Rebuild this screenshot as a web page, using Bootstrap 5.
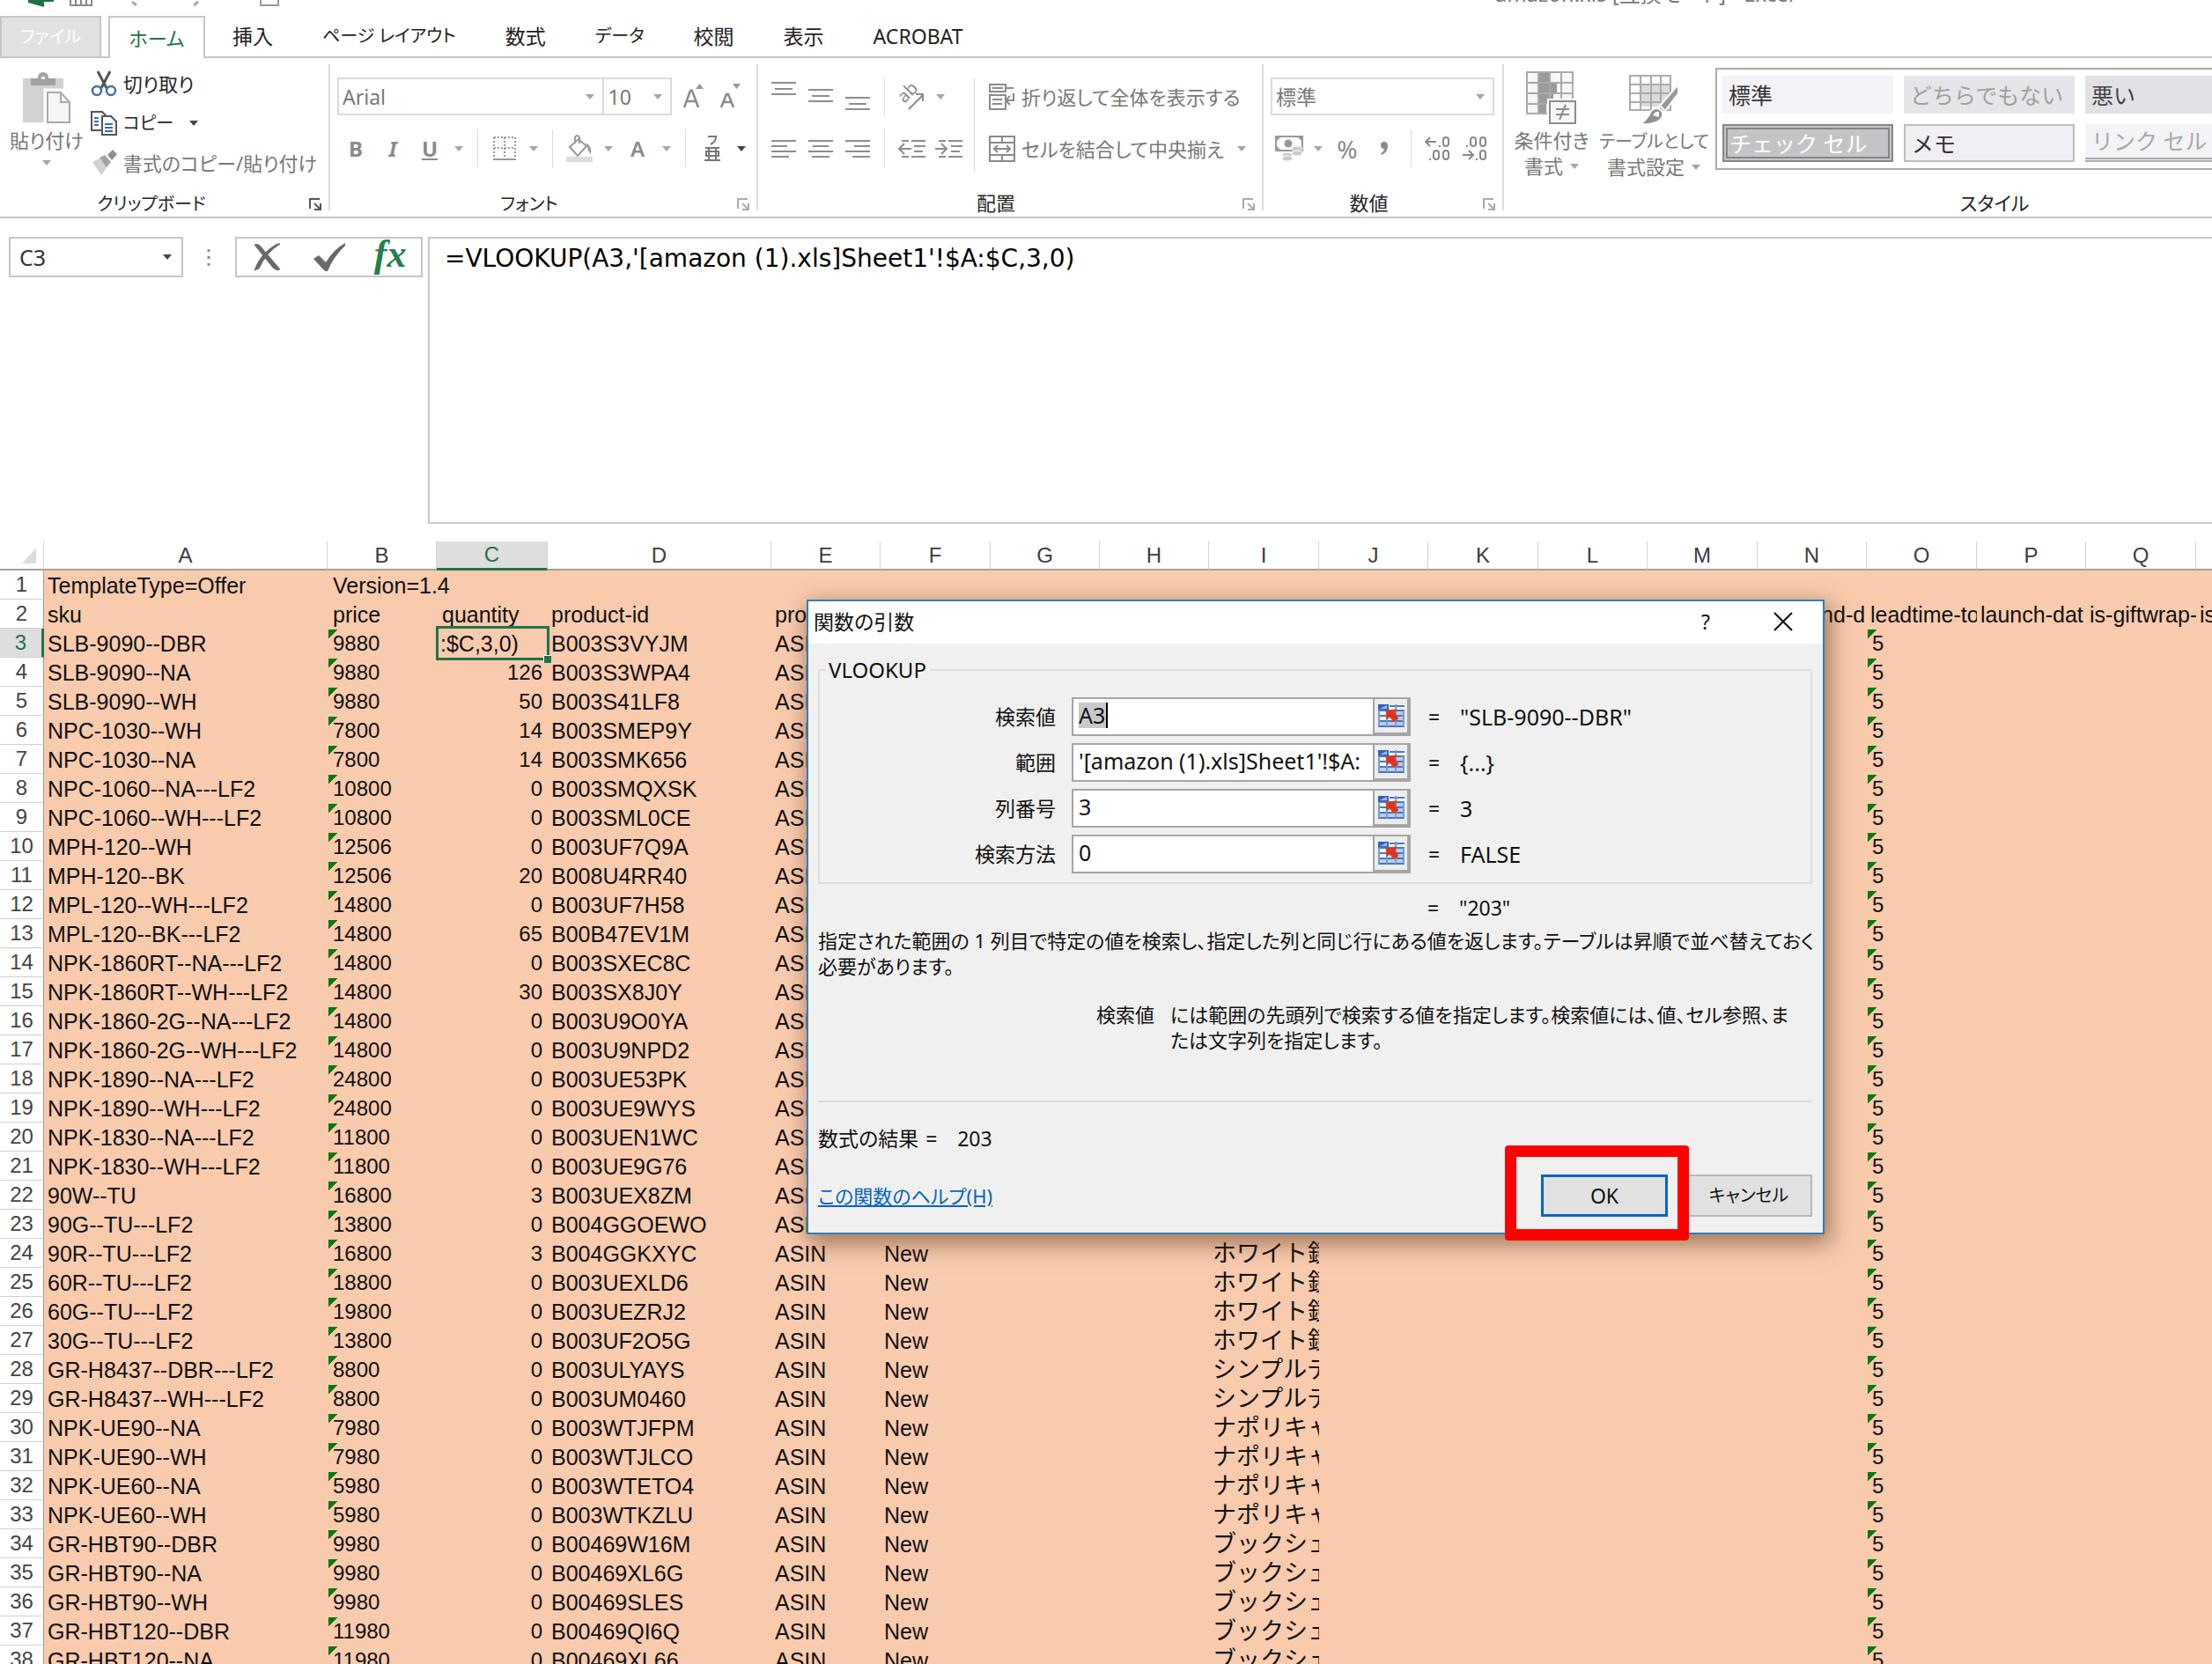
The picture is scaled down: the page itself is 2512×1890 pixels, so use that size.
<!DOCTYPE html>
<html lang="ja">
<head>
<meta charset="utf-8">
<meta name="viewport" content="width=device-width, initial-scale=1">
<title>amazon.xls - Excel</title>
<link href="https://cdn.jsdelivr.net/npm/bootstrap@5.3.0/dist/css/bootstrap.min.css" rel="stylesheet">
<style>
  :root { --ui: "Noto Sans", "Noto Sans CJK JP", sans-serif; --xl: #217346; --line: #c6c6c6; --off: #8a8a8a; }
  html { overflow: hidden; }
  body { font-family: var(--ui); font-size: 22px; line-height: 30px; color: #262626; background: #fff; height: 100vh; overflow: hidden; }
  .ui-kana { font-feature-settings: "palt" 1; }
  .narrow { font-size: 20px; }
  button { font: inherit; color: inherit; font-feature-settings: inherit; }
  svg { display: block; }

  /* title strip */
  .title-strip { height: 18px; padding: 0 0 10px 32px; color: #777; }
  .title-strip .doc-name { margin-left: auto; margin-right: 475px; font-size: 24px; }

  /* tabs */
  .tab-strip { height: 48px; border-bottom: 2px solid var(--line); font-size: 23px; }
  .tab-strip button { border: 0; background: none; padding: 0 28px 2px; height: 48px; color: #222; }
  .tab-strip .tab-file { width: 115px; padding: 0; background: #e2e2e2; border: 2px solid var(--line); color: #fff; margin-right: 8px; }
  .tab-strip .tab-home { width: 110px; padding: 0; background: #fff; border: 2px solid var(--line); border-bottom: 0; color: var(--xl); margin-right: 3px; font-size: 22px; }

  /* ribbon */
  .ribbon { height: 182px; border-bottom: 2px solid var(--line); padding-top: 7px; overflow: hidden; }
  .rgroup { height: 166px; border-right: 2px solid #dcdcdc; padding: 0 8px; display: flex; flex-direction: column; flex: none; }
  .rgroup-body { height: 140px; }
  .rgroup-foot { height: 26px; position: relative; text-align: center; line-height: 34px; }
  .rgroup-foot span { padding-right: 32px; }
  .rgroup-foot svg { position: absolute; right: 0; bottom: 0; }
  .g-clip { width: 375px; padding-left: 11px; } .g-font { width: 486px; } .g-align { width: 574px; } .g-num { width: 273px; }
  .g-style { width: 1114px; border: 0; }
  .clip-list { height: 135px; margin-top: -1px; }
  .tool { border: 0; background: none; padding: 0; width: 42px; height: 44px; display: flex; align-items: center; justify-content: center; color: var(--off); font-size: 24px; flex: none; }
  .drop { border: 0; background: none; padding: 0; width: 24px; height: 44px; display: flex; align-items: center; justify-content: center; flex: none; color: #a6a6a6; }
  .drop::after, .tri::after { content: ""; border: 5px solid transparent; border-top: 6px solid; border-bottom: 0; }
  .tri::after { display: inline-block; margin-left: 8px; vertical-align: 5px; color: #a6a6a6; }
  .dark-drop { color: #444; }
  .vsep { width: 1px; height: 43px; background: #dcdcdc; margin: 0 9px; flex: none; }
  .tall-sep { width: 1px; height: 107px; background: #dcdcdc; }
  .row-a { height: 43px; margin-top: 15px; } .row-b { height: 43px; margin-top: 16px; }
  .cmd { border: 0; background: none; padding: 0; display: flex; align-items: center; gap: 7px; white-space: nowrap; }
  .muted-cmd { color: #777; }
  .pick { appearance: none; height: 43px; border: 2px solid #dadada; border-radius: 0; background: #fff url("data:image/svg+xml,%3Csvg xmlns='http://www.w3.org/2000/svg' width='10' height='6'%3E%3Cpath d='M0 0h10L5 6z' fill='%23a6a6a6'/%3E%3C/svg%3E") no-repeat right 9px center; color: #777; padding: 0 4px; font-size: 23px; }
  .pick-face { width: 310px; } .pick-size { width: 80px; margin-left: -2px; } .pick-num { width: 254px; }
  .big-cmd { border: 0; background: none; padding: 0; line-height: 29px; color: #777; white-space: nowrap; align-self: flex-start; margin-top: 8px; }
  .big-cmd svg { margin: 0 auto 4px; }
  .cmd-cond { width: 92px; } .cmd-table { width: 124px; }
  .gallery { border: 2px solid #ababab; height: 116px; padding: 7px 6px; display: grid; grid-template-columns: repeat(4, 194px); grid-auto-rows: 43px; gap: 12px; margin-top: 4px; overflow: hidden; flex: 1; }
  .swatch { border: 0; text-align: left; padding: 0 7px; font-size: 25px; line-height: 36px; background: #f4f3f7; color: #333; white-space: nowrap; font-feature-settings: normal; }
  .sw-neutral { background: #e6e5e9; color: #a0a0a0; } .sw-bad { background: #e2e1e5; color: #444; }
  .sw-check { background: #c4c4c8; color: #fff; border: 6px double #858585; padding: 0 2px; line-height: 26px; }
  .sw-memo { background: #f1eff3; border: 2px solid #bdbdbd; } .sw-link { color: #a8a8a8; border-bottom: 5px double #aaa; }

  /* formula bar */
  .formula-bar { padding: 21px 0 20px 10px; }
  .name-box { width: 198px; height: 46px; border: 2px solid var(--line); }
  .name-box input { border: 0; width: 150px; padding: 0 10px; font-size: 25px; outline: 0; color: #333; }
  .fx-box { width: 213px; height: 46px; border: 2px solid var(--line); margin-right: 6px; }
  .fx-box button { border: 0; background: none; padding: 0; width: 70px; height: 42px; display: flex; align-items: center; justify-content: center; }
  .fx-mark { font: italic bold 44px/36px "Liberation Serif", serif; color: #23804d; padding-bottom: 6px; }
  .grip { width: 59px; height: 46px; color: #777; }
  .formula-text { height: 326px; border: 2px solid var(--line); border-right: 0; resize: none; padding: 5px 17px; font-size: 28px; line-height: 36px; color: #000; outline: 0; font-family: "DejaVu Sans", sans-serif; min-width: 0; }

  /* sheet */
  .sheet { table-layout: fixed; width: 2618px; border-collapse: separate; border-spacing: 0; font: 25px/32px "Liberation Sans", "Noto Sans CJK JP", sans-serif; color: #111; }
  .sheet th, .sheet td { height: 33px; padding: 0 0 0 4px; white-space: nowrap; overflow: hidden; font-weight: 400; }
  .sheet thead th { padding: 0; text-align: center; color: #3c3c3c; border-bottom: 2px solid #a99c94; border-right: 1px solid #d4d4d4; line-height: 30px; font-size: 24px; }
  .sheet tbody th { padding: 0; text-align: center; color: #444; border-right: 1px solid #9c9c9c; border-bottom: 1px solid #d0d0d0; font-size: 24px; }
  .sheet tbody td { background-color: #f8cbad; }
  .sheet thead th.col-on { background: #dedede; color: var(--xl); border-bottom: 3px solid var(--xl); }
  .sheet tbody th.row-on { background: #dedede; color: var(--xl); border-right: 3px solid var(--xl); }
  .sheet td.spill { overflow: visible; padding-left: 6px; }
  .sheet td.as-text { background-image: linear-gradient(to bottom right, #0a7a0a 50%, transparent 50%); background-size: 10px 11px; background-repeat: no-repeat; background-position: 1px 1px; padding-left: 6px; font-size: 24px; }
  .sheet td.num { text-align: right; padding: 0 6px 0 0; font-size: 24px; }
  .sheet td.jp { font-size: 27px; line-height: 30px; }
  .sheet td.cell-on { position: relative; overflow: visible; }
  .cell-on .ring { position: absolute; inset: -3px -2px -3px -1px; border: 3px solid var(--xl); }
  .cell-on .ring::after { content: ""; position: absolute; right: -5px; bottom: -6px; width: 9px; height: 9px; background: var(--xl); border: solid #fff; border-width: 1px 0 0 1px; }
  .c-head { width: 50px; } .c-a { width: 322px; } .c-b, .c-n { width: 124px; } .c-c { width: 126px; } .c-d { width: 254px; } .c-w { width: 125px; }

  /* function arguments window */
  .dlg { position: absolute; left: 916px; top: 681px; width: 1156px; border: 2px solid #2f7fb8; background: #f0f0f0; color: #111; font-size: 23px; box-shadow: 4px 8px 24px 2px rgba(70, 30, 0, .5); }
  .dlg-title { height: 48px; background: #fff; padding: 0 26px 2px 6px; }
  .dlg-title button { border: 0; background: none; padding: 0; }
  .dlg-body { padding: 15px 12px 18px 11px; }
  .args { border: 2px solid #dcdcdc; padding: 16px 0 10px; }
  .args legend { float: none; width: auto; margin: 0 0 0 6px; padding: 0 4px; font-size: 24px; line-height: 30px; }
  .arg { height: 44px; margin-bottom: 8px; } .arg:last-child { margin-bottom: 0; }
  .arg label { width: 268px; text-align: right; margin-right: 18px; }
  .arg-in { width: 385px; height: 44px; border: 2px solid #a5a5a5; background: #fff; }
  .arg-in input { border: 0; outline: 0; background: none; padding: 0 0 4px 6px; flex: 1; min-width: 0; font-size: 25px; color: #111; }
  .arg-in .is-picked { background: linear-gradient(#000, #000) 37px 4px / 2px 29px no-repeat, linear-gradient(#c9c9c9, #c9c9c9) 6px 4px / 31px 29px no-repeat; }
  .arg-in button { width: 41px; border: 2px solid #a5a5a5; border-width: 0 2px 2px 2px; background: #ececec; padding: 0; display: flex; align-items: center; justify-content: center; }
  .eq { width: 36px; } .arg .eq { margin-left: 20px; }
  .arg-val { font-size: 25px; }
  .total { margin: 12px 0 8px 692px; }
  .desc { line-height: 29px; font-size: 22px; margin: 0; white-space: nowrap; }
  .param { margin: 26px 0 0 316px; gap: 18px; }
  .rule { border-top: 2px solid #dadada; margin: 54px 0 26px; }
  .foot { margin-top: 26px; height: 48px; }
  .dlg a { color: #0563c1; font-size: 22px; }
  .key { width: 144px; height: 48px; border: 2px solid #b8b8b8; background: #e1e1e1; padding: 0; }
  .key-ok { border: 3px solid #0a62c9; }
  .key-slot { position: relative; margin-right: 20px; }
  .callout-box { position: absolute; inset: -33px -24px -27px -41px; border: 13px solid #f00; border-radius: 4px; pointer-events: none; z-index: 2; }
</style>
</head>
<body class="d-flex flex-column position-relative">

<svg width="0" height="0" class="position-absolute">
  <defs>
    <g id="launch" fill="none" stroke-width="2"><path d="M1 12V1h11M6 6l6 6M13 6v7H6"/></g>
    <g id="pickrange">
      <rect x="0" y="0" width="30" height="26" fill="#f3f6fb"/>
      <rect x="0" y="0" width="12" height="6" fill="#2f62b8"/><path d="M2 5L10 1v4z" fill="#9fc0ee"/>
      <rect x="0" y="18" width="30" height="8" fill="#b9cdee"/><rect x="21" y="8" width="9" height="18" fill="#b9cdee"/>
      <path d="M13 2h17M0 7h30M0 13h30M0 19h30M0 25h30" stroke="#4a76bd" stroke-width="2" fill="none"/>
      <path d="M1 7v18M10 7v18M20 0v25M29 7v18" stroke="#7b9bd0" stroke-width="2" fill="none"/>
      <path d="M9 7l12-1-2 4 4 6-5 4-5-6-3 3z" fill="#e2331c" stroke="#c0503c" stroke-width="1"/>
    </g>
  </defs>
</svg>

<header>
  <div class="title-strip d-flex align-items-end ui-kana">
    <svg width="30" height="24" viewBox="0 0 30 24"><path d="M0 2L18 0v24L0 19zM18 4h11v14H18z" fill="#1e7145"/></svg>
    <svg class="ms-3" width="28" height="24" viewBox="0 0 28 24"><path d="M2 0v22h24V0M8 22v-8h12v8M14 16v6" fill="none" stroke="#888" stroke-width="2"/></svg>
    <svg width="184" height="24" viewBox="0 0 184 24"><path d="M44 18l5 4M114 22l5-4" fill="none" stroke="#aaa" stroke-width="3"/></svg>
    <svg width="28" height="24" viewBox="0 0 28 24"><path d="M6 0v22h20V0" fill="none" stroke="#999" stroke-width="2"/></svg>
    <span class="doc-name">amazon.xls [互換モード] - Excel</span>
  </div>
  <nav class="tab-strip d-flex ui-kana">
    <button class="tab-file narrow">ファイル</button>
    <button class="tab-home">ホーム</button>
    <button>挿入</button><button class="narrow">ページ レイアウト</button><button>数式</button><button class="narrow">データ</button><button>校閲</button><button>表示</button><button>ACROBAT</button>
  </nav>

  <div class="ribbon d-flex ui-kana">
    <section class="rgroup g-clip">
      <div class="rgroup-body d-flex">
        <button class="big-cmd">
          <svg width="58" height="60" viewBox="0 0 58 60"><path d="M2 8h46v50H2z" fill="#d2d0d3"/><path d="M11 8h8q0-7 6-7t6 7h8v8H11z" fill="#a3a1a4"/><path d="M23 6h4v3h-4z" fill="#fff"/><path d="M28 22h18l11 12v25H28z" fill="#f6f4f7" stroke="#fff" stroke-width="5"/><path d="M30 24h15l10 11v23H30zM45 24v11h10" fill="#f6f4f7" stroke="#a9a9a9" stroke-width="2"/></svg>
          貼り付け<span class="drop w-100 h-auto pt-2"></span>
        </button>
        <div class="clip-list ms-2 d-flex flex-column">
          <button class="cmd h-100"><svg width="30" height="30" viewBox="0 0 30 30" fill="none"><path d="M8 1l10 19M22 1L12 20" stroke="#555" stroke-width="3"/><circle cx="7" cy="23" r="5" stroke="#4472a8" stroke-width="2.500"/><circle cx="23" cy="23" r="5" stroke="#4472a8" stroke-width="2.500"/></svg>切り取り</button>
          <button class="cmd h-100"><svg width="30" height="28" viewBox="0 0 30 28"><path d="M1 1h12l4 4v17H1z" fill="#fff" stroke="#555" stroke-width="2"/><path d="M4 8h5M4 12h5M4 16h5" stroke="#2f6fb0" stroke-width="2"/><path d="M13 6h10l6 6v15H13z" fill="#fff" stroke="#555" stroke-width="2"/><path d="M16 15h9M16 19h9M16 23h9" stroke="#2f6fb0" stroke-width="2"/></svg><span class="narrow">コピー</span><span class="drop dark-drop ms-1"></span></button>
          <button class="cmd h-100 muted-cmd"><svg width="30" height="30" viewBox="0 0 30 30"><path d="M2 14l8-4 9 9-7 10z" fill="#d0d0d0"/><path d="M10 9l6-3 7 8-5 6z" fill="#a2a2a2"/><path d="M19 6l6-6 5 5-6 7z" fill="#8f8f8f"/></svg>書式のコピー/貼り付け</button>
        </div>
      </div>
      <div class="rgroup-foot"><span class="narrow">クリップボード</span><svg width="14" height="14" stroke="#555"><use href="#launch"/></svg></div>
    </section>

    <section class="rgroup g-font">
      <div class="rgroup-body">
        <div class="row-a d-flex">
          <select class="pick pick-face" aria-label="フォント"><option>Arial</option></select>
          <select class="pick pick-size" aria-label="サイズ"><option>10</option></select>
          <button class="tool ms-1" aria-label="拡大"><svg width="26" height="32" viewBox="0 0 26 32"><path d="M2 28L9 9h2l7 19M5 21h10" fill="none" stroke="#8a8a8a" stroke-width="2.500"/><path d="M15 7h9l-4.500-6z" fill="#999"/></svg></button>
          <button class="tool" aria-label="縮小"><svg width="26" height="32" viewBox="0 0 26 32"><path d="M2 28L8 13h2l6 15M5 22h8" fill="none" stroke="#8a8a8a" stroke-width="2.500"/><path d="M15 1h9l-4.500 6z" fill="#999"/></svg></button>
        </div>
        <div class="row-b d-flex align-items-center">
          <button class="tool fw-bold">B</button><button class="tool fw-bold fst-italic">I</button><button class="tool fw-bold text-decoration-underline">U</button><button class="drop" aria-label="下線"></button><i class="vsep"></i>
          <button class="tool" aria-label="罫線"><svg width="26" height="27" viewBox="0 0 26 27" fill="none" stroke="#999" stroke-width="2"><path d="M1 1h24M1 13h24M1 1v24M13 1v24M25 1v24" stroke-dasharray="2 2"/><path d="M0 26h26"/></svg></button><button class="drop" aria-label="罫線メニュー"></button><i class="vsep"></i>
          <button class="tool" aria-label="塗りつぶし"><svg width="30" height="31" viewBox="0 0 30 31"><path d="M4 14L14 5l9 8-10 11zM10 10V3q2-4 5 0v7" fill="#fff" stroke="#999" stroke-width="2"/><path d="M22 9q8 4 6 13-3-2-4-8z" fill="#999"/><path d="M0 25h30v6H0z" fill="#dcdcdc"/></svg></button><button class="drop" aria-label="塗りつぶしの色"></button>
          <button class="tool fw-semibold">A</button><button class="drop" aria-label="文字の色"></button><i class="vsep"></i>
          <button class="tool" aria-label="ふりがな"><svg width="18" height="32" viewBox="0 0 18 32" fill="none" stroke="#777" stroke-width="2"><path d="M4 2h9q0 6-6 9M1 15h16M5 15v13M13 15v13M2 19v5h14v-5zM0 29h18"/></svg></button><button class="drop dark-drop" aria-label="ふりがなメニュー"></button>
        </div>
      </div>
      <div class="rgroup-foot"><span class="narrow">フォント</span><svg width="14" height="14" stroke="#aaa"><use href="#launch"/></svg></div>
    </section>

    <section class="rgroup g-align">
      <div class="rgroup-body d-flex">
        <div>
          <div class="row-a d-flex align-items-center">
            <button class="tool" aria-label="上揃え"><svg width="28" height="40" viewBox="0 0 28 40" stroke="#8d8d8d" stroke-width="2"><path d="M0 4h28M4 11h20M0 17h28"/></svg></button>
            <button class="tool" aria-label="上下中央"><svg width="28" height="40" viewBox="0 0 28 40" stroke="#8d8d8d" stroke-width="2"><path d="M0 12h28M4 19h20M0 25h28"/></svg></button>
            <button class="tool" aria-label="下揃え"><svg width="28" height="40" viewBox="0 0 28 40" stroke="#8d8d8d" stroke-width="2"><path d="M0 21h28M4 28h20M0 34h28"/></svg></button>
            <i class="vsep"></i>
            <button class="tool" aria-label="方向"><svg width="34" height="32" viewBox="0 0 34 32"><text transform="translate(9 24) rotate(-45)" font-size="20" fill="#8a8a8a" font-family="Noto Sans, sans-serif">ab</text><path d="M14 30l16-16M30 21v-8h-8" fill="none" stroke="#8a8a8a" stroke-width="2"/></svg></button><button class="drop" aria-label="方向メニュー"></button>
          </div>
          <div class="row-b d-flex align-items-center">
            <button class="tool" aria-label="左揃え"><svg width="28" height="22" viewBox="0 0 28 22" stroke="#8d8d8d" stroke-width="2"><path d="M0 2h28M0 8h18M0 14h28M0 20h20"/></svg></button>
            <button class="tool" aria-label="中央揃え"><svg width="28" height="22" viewBox="0 0 28 22" stroke="#8d8d8d" stroke-width="2"><path d="M0 2h28M5 8h18M0 14h28M4 20h20"/></svg></button>
            <button class="tool" aria-label="右揃え"><svg width="28" height="22" viewBox="0 0 28 22" stroke="#8d8d8d" stroke-width="2"><path d="M0 2h28M10 8h18M0 14h28M8 20h20"/></svg></button>
            <i class="vsep"></i>
            <button class="tool" aria-label="インデント解除"><svg width="31" height="22" viewBox="0 0 31 22" stroke="#8d8d8d" stroke-width="2" fill="none"><path d="M4 2h8M15 2h16M18 8h13M18 14h10M4 20h8M15 20h16M1 11h14M7 5l-6 6 6 6"/></svg></button>
            <button class="tool" aria-label="インデント"><svg width="31" height="22" viewBox="0 0 31 22" stroke="#8d8d8d" stroke-width="2" fill="none"><path d="M4 2h8M15 2h16M18 8h13M18 14h10M4 20h8M15 20h16M0 11h13M7 5l6 6-6 6"/></svg></button>
          </div>
        </div>
        <i class="tall-sep mt-3 ms-2"></i>
        <div class="ms-3">
          <div class="row-a d-flex align-items-center"><button class="cmd muted-cmd"><svg width="30" height="30" viewBox="0 0 30 30" fill="none" stroke="#8a8a8a" stroke-width="2"><path d="M1 1h18v8H1zM4 5h12M19 5h9M1 13h18v16H1zM4 18h11M4 23h11M28 11v8h-8M24 14l-5 5 5 5"/></svg>折り返して全体を表示する</button></div>
          <div class="row-b d-flex align-items-center"><button class="cmd muted-cmd"><svg width="30" height="30" viewBox="0 0 30 30" fill="none" stroke="#8a8a8a" stroke-width="2"><path d="M1 1h28v28H1zM1 8h28M1 22h28M15 1v7M15 22v7M6 15h18M10 11l-4 4 4 4M20 11l4 4-4 4"/></svg>セルを結合して中央揃え</button><button class="drop ms-2" aria-label="結合メニュー"></button></div>
        </div>
      </div>
      <div class="rgroup-foot"><span>配置</span><svg width="14" height="14" stroke="#aaa"><use href="#launch"/></svg></div>
    </section>

    <section class="rgroup g-num">
      <div class="rgroup-body">
        <div class="row-a"><select class="pick pick-num" aria-label="表示形式"><option>標準</option></select></div>
        <div class="row-b d-flex align-items-center">
          <button class="tool" aria-label="通貨"><svg width="32" height="30" viewBox="0 0 32 30"><path d="M1 1h30v16H1z" fill="none" stroke="#999" stroke-width="2"/><path d="M1 1h6l-6 6zM31 1h-6l6 6zM1 17h6l-6-6z" fill="#999"/><circle cx="15" cy="9" r="4.500" fill="#999"/><g fill="#ccc" stroke="#fff"><ellipse cx="25" cy="15" rx="6" ry="3"/><ellipse cx="25" cy="20" rx="6" ry="3"/><ellipse cx="14" cy="22" rx="6" ry="3"/><ellipse cx="14" cy="26" rx="6" ry="3"/></g></svg></button><button class="drop" aria-label="通貨メニュー"></button>
          <button class="tool fs-3">%</button><button class="tool fw-bold" aria-label="桁区切り"><svg width="10" height="16" viewBox="0 0 10 16"><path d="M1 4q0-4 4-4t4 5q0 7-7 10l-1-2q4-2 4-5Q1 8 1 4z" fill="#8a8a8a"/></svg></button><i class="vsep"></i>
          <button class="tool" aria-label="小数点以下を増やす"><svg width="30" height="28" viewBox="0 0 30 28" fill="none" stroke="#888" stroke-width="2"><path d="M1 6h12M6 1L1 6l5 5M17 10v2M6 25v2"/><rect x="21" y="1" width="6" height="10" rx="3"/><rect x="10" y="16" width="6" height="10" rx="3"/><rect x="21" y="16" width="6" height="10" rx="3"/></svg></button>
          <button class="tool" aria-label="小数点以下を減らす"><svg width="30" height="28" viewBox="0 0 30 28" fill="none" stroke="#888" stroke-width="2"><path d="M1 21h12M8 16l5 5-5 5M6 10v2M17 25v2"/><rect x="10" y="1" width="6" height="10" rx="3"/><rect x="21" y="1" width="6" height="10" rx="3"/><rect x="21" y="16" width="6" height="10" rx="3"/></svg></button>
        </div>
      </div>
      <div class="rgroup-foot"><span>数値</span><svg width="14" height="14" stroke="#aaa"><use href="#launch"/></svg></div>
    </section>

    <section class="rgroup g-style">
      <div class="rgroup-body d-flex">
        <button class="big-cmd cmd-cond me-2">
          <svg width="58" height="60" viewBox="0 0 58 60"><path d="M1 1h52v47H1z" fill="#f7f6f8"/><path d="M15 1h12v12H15zM15 13h20v12H15zM15 25h16v12H15zM15 37h8v11h-8z" fill="#9c9a9e"/><path d="M1 1h52v47H1zM1 13h52M1 25h52M1 37h52M14 1v47M27 1v47M40 1v47" fill="none" stroke="#aaa" stroke-width="2"/><path d="M24 31h34v29H24z" fill="#fff"/><path d="M27 34h29v25H27zM34 43h15M34 49h15M45 38l-7 17" fill="#f7f6f8" stroke="#8c8c8c" stroke-width="2"/></svg>
          条件付き<br><span class="tri">書式</span>
        </button>
        <button class="big-cmd cmd-table">
          <svg width="58" height="60" viewBox="0 0 58 60"><path d="M15 15h33v25H15z" fill="#dcdadd"/><path d="M2 5h46v39H2zM2 15h46M2 25h46M2 35h46M14 5v39M26 5v39M37 5v39" fill="none" stroke="#aaa" stroke-width="2"/><path d="M57 15v10L42 45l-6-6z" fill="#999" stroke="#fff" stroke-width="2"/><path d="M14 60q8-6 12-15 6-6 12 0 4 6-4 12-8 4-20 3z" fill="#8f8f8f" stroke="#fff" stroke-width="2"/><path d="M28 50q3-5 7-4v6z" fill="#fff"/></svg>
          <span class="narrow">テーブルとして</span><br><span class="tri">書式設定</span>
        </button>
        <div class="gallery ms-2">
          <button class="swatch">標準</button><button class="swatch sw-neutral">どちらでもない</button><button class="swatch sw-bad">悪い</button><i></i>
          <button class="swatch sw-check">チェック セル</button><button class="swatch sw-memo">メモ</button><button class="swatch sw-link">リンク セル</button>
        </div>
      </div>
      <div class="rgroup-foot">スタイル</div>
    </section>
  </div>

  <div class="formula-bar d-flex align-items-start">
    <div class="name-box d-flex align-items-center justify-content-between"><input value="C3" aria-label="名前ボックス"><button class="drop dark-drop me-1" aria-label="名前の一覧"></button></div>
    <svg class="grip" viewBox="0 0 60 46" fill="#888"><path d="M28 14h3v3h-3zM28 22h3v3h-3zM28 30h3v3h-3z"/></svg>
    <div class="fx-box d-flex">
      <button aria-label="キャンセル"><svg width="36" height="34" viewBox="0 0 36 34"><path d="M3 3q4-2 7 2l22 26q-4 2-8-2zM32 2q-16 10-24 28l-5 2Q10 12 29 2z" fill="#6a6a6a" stroke="#6a6a6a" stroke-width="1"/></svg></button>
      <button aria-label="入力"><svg width="38" height="34" viewBox="0 0 38 34"><path d="M1 19l6-4 8 8Q24 8 37 1v3Q24 16 17 33h-3z" fill="#6a6a6a"/></svg></button>
      <button aria-label="関数の挿入"><span class="fx-mark">fx</span></button>
    </div>
    <textarea class="formula-text flex-grow-1" aria-label="数式バー" spellcheck="false">=VLOOKUP(A3,'[amazon (1).xls]Sheet1'!$A:$C,3,0)</textarea>
  </div>
</header>

<main class="flex-grow-1 overflow-hidden">
  <table class="sheet" id="sheet">
    <colgroup><col class="c-head"><col class="c-a"><col class="c-b"><col class="c-c"><col class="c-d"><col class="c-n"><col class="c-w"><col class="c-n"><col class="c-n"><col class="c-w"><col class="c-n"><col class="c-w"><col class="c-n"><col class="c-w"><col class="c-n"><col class="c-w"><col class="c-n"><col class="c-w"><col class="c-n"></colgroup>
    <thead><tr id="cols"><th><svg class="ms-auto me-2" width="16" height="18" viewBox="0 0 16 18"><path d="M16 0v18H0z" fill="#dcdcdc"/></svg></th></tr></thead>
    <tbody id="rows"></tbody>
  </table>
</main>

<section class="dlg" role="dialog" aria-label="関数の引数">
  <div class="dlg-title d-flex align-items-center ui-kana">
    <span class="me-auto">関数の引数</span>
    <button class="me-5">?</button>
    <button class="ms-4" aria-label="閉じる"><svg class="me-2" width="22" height="22" viewBox="0 0 22 22"><path d="M1 1l20 20M21 1L1 21" stroke="#111" stroke-width="2"/></svg></button>
  </div>
  <div class="dlg-body ui-kana">
    <fieldset class="args">
      <legend>VLOOKUP</legend>
      <div class="arg d-flex align-items-center"><label for="a1">検索値</label><div class="arg-in d-flex"><input id="a1" class="is-picked" value="A3"><button aria-label="範囲選択"><svg width="30" height="27"><use href="#pickrange"/></svg></button></div><span class="eq">=</span><span class="arg-val">"SLB-9090--DBR"</span></div>
      <div class="arg d-flex align-items-center"><label for="a2">範囲</label><div class="arg-in d-flex"><input id="a2" value="'[amazon (1).xls]Sheet1'!$A:"><button aria-label="範囲選択"><svg width="30" height="27"><use href="#pickrange"/></svg></button></div><span class="eq">=</span><span class="arg-val">{...}</span></div>
      <div class="arg d-flex align-items-center"><label for="a3">列番号</label><div class="arg-in d-flex"><input id="a3" value="3"><button aria-label="範囲選択"><svg width="30" height="27"><use href="#pickrange"/></svg></button></div><span class="eq">=</span><span class="arg-val">3</span></div>
      <div class="arg d-flex align-items-center"><label for="a4">検索方法</label><div class="arg-in d-flex"><input id="a4" value="0"><button aria-label="範囲選択"><svg width="30" height="27"><use href="#pickrange"/></svg></button></div><span class="eq">=</span><span class="arg-val">FALSE</span></div>
    </fieldset>
    <div class="total d-flex"><span class="eq">=</span><span>"203"</span></div>
    <p class="desc">指定された範囲の 1 列目で特定の値を検索し、指定した列と同じ行にある値を返します。テーブルは昇順で並べ替えておく<br>必要があります。</p>
    <div class="param d-flex"><p class="desc">検索値</p><p class="desc">には範囲の先頭列で検索する値を指定します。検索値には、値、セル参照、ま<br>たは文字列を指定します。</p></div>
    <div class="rule"></div>
    <div class="d-flex"><span class="me-2">数式の結果</span><span class="eq">=</span><span>203</span></div>
    <div class="foot d-flex align-items-center">
      <a href="#" class="me-auto">この関数のヘルプ(H)</a>
      <div class="key-slot"><button class="key key-ok">OK</button><div class="callout-box"></div></div>
      <button class="key narrow">キャンセル</button>
    </div>
  </div>
</section>

<script src="https://cdn.jsdelivr.net/npm/bootstrap@5.3.0/dist/js/bootstrap.bundle.min.js"></script>
<script>
  // Inventory rows: sku, price, quantity, product-id, title
  const items = [
    ["SLB-9090--DBR","9880",":$C,3,0)","B003S3VYJM"],["SLB-9090--NA","9880",126,"B003S3WPA4"],["SLB-9090--WH","9880",50,"B003S41LF8"],
    ["NPC-1030--WH","7800",14,"B003SMEP9Y"],["NPC-1030--NA","7800",14,"B003SMK656"],["NPC-1060--NA---LF2","10800",0,"B003SMQXSK"],
    ["NPC-1060--WH---LF2","10800",0,"B003SML0CE"],["MPH-120--WH","12506",0,"B003UF7Q9A"],["MPH-120--BK","12506",20,"B008U4RR40"],
    ["MPL-120--WH---LF2","14800",0,"B003UF7H58"],["MPL-120--BK---LF2","14800",65,"B00B47EV1M"],["NPK-1860RT--NA---LF2","14800",0,"B003SXEC8C"],
    ["NPK-1860RT--WH---LF2","14800",30,"B003SX8J0Y"],["NPK-1860-2G--NA---LF2","14800",0,"B003U9O0YA"],["NPK-1860-2G--WH---LF2","14800",0,"B003U9NPD2"],
    ["NPK-1890--NA---LF2","24800",0,"B003UE53PK"],["NPK-1890--WH---LF2","24800",0,"B003UE9WYS"],["NPK-1830--NA---LF2","11800",0,"B003UEN1WC"],
    ["NPK-1830--WH---LF2","11800",0,"B003UE9G76"],["90W--TU","16800",3,"B003UEX8ZM"],["90G--TU---LF2","13800",0,"B004GGOEWO"],
    ["90R--TU---LF2","16800",3,"B004GGKXYC","ホワイト鏡"],["60R--TU---LF2","18800",0,"B003UEXLD6","ホワイト鏡"],["60G--TU---LF2","19800",0,"B003UEZRJ2","ホワイト鏡"],
    ["30G--TU---LF2","13800",0,"B003UF2O5G","ホワイト鏡"],["GR-H8437--DBR---LF2","8800",0,"B003ULYAYS","シンプルデ"],["GR-H8437--WH---LF2","8800",0,"B003UM0460","シンプルデ"],
    ["NPK-UE90--NA","7980",0,"B003WTJFPM","ナポリキャ"],["NPK-UE90--WH","7980",0,"B003WTJLCO","ナポリキャ"],["NPK-UE60--NA","5980",0,"B003WTETO4","ナポリキャ"],
    ["NPK-UE60--WH","5980",0,"B003WTKZLU","ナポリキャ"],["GR-HBT90--DBR","9980",0,"B00469W16M","ブックシェ"],["GR-HBT90--NA","9980",0,"B00469XL6G","ブックシェ"],
    ["GR-HBT90--WH","9980",0,"B00469SLES","ブックシェ"],["GR-HBT120--DBR","11980",0,"B00469QI6Q","ブックシェ"],["GR-HBT120--NA","11980",0,"B00469XL66","ブックシェ"]
  ];
  const letters = "ABCDEFGHIJKLMNOPQR".split("");
  document.getElementById("cols").insertAdjacentHTML("beforeend",
    letters.map(c => `<th${c === "C" ? ' class="col-on"' : ""}>${c === "R" ? "" : c}</th>`).join(""));

  const line = (n, cells) => `<tr><th${n === 3 ? ' class="row-on"' : ""}>${n}</th>` +
    letters.map(c => { const [v = "", k = ""] = cells[c] || []; return `<td${k ? ` class="${k}"` : ""}>${v}</td>`; }).join("") + "</tr>";

  let html = line(1, { A: ["TemplateType=Offer"], B: ["Version=1.4", "spill"] });
  html += line(2, { A: ["sku"], B: ["price", "spill"], C: ["quantity", "spill"], D: ["product-id"], E: ["product-id"], N: ["sale-end-d"],
    O: ["leadtime-to"], P: ["launch-dat"], Q: ["is-giftwrap-"], R: ["is-gift"] });
  items.forEach(([sku, price, qty, id, title], i) => {
    const n = i + 3, cells = { A: [sku], B: [price, "as-text"], D: [id], E: ["ASIN"], O: ["5", "as-text"] };
    cells.C = n === 3 ? [qty + '<span class="ring"></span>', "cell-on"] : [qty, "num"];
    if (title) { cells.F = ["New"]; cells.I = [title, "jp"]; }
    html += line(n, cells);
  });
  document.getElementById("rows").innerHTML = html;
</script>
</body>
</html>
